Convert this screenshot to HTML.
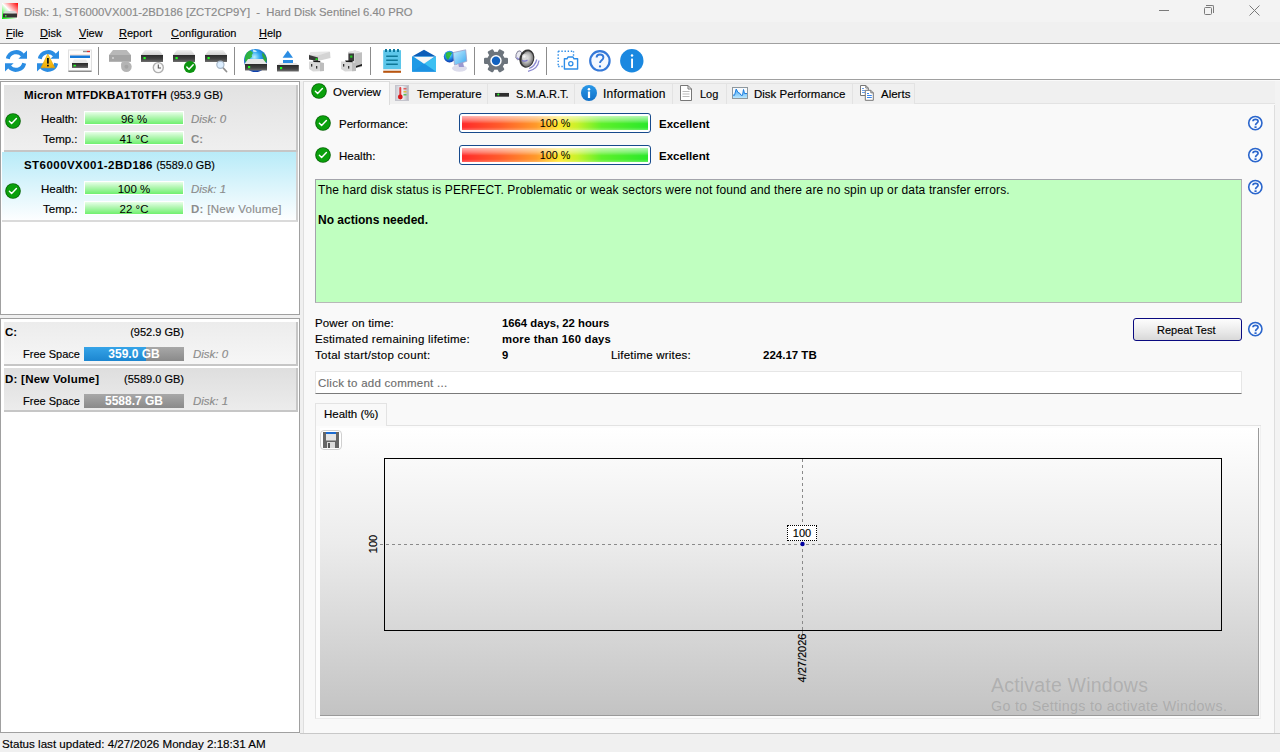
<!DOCTYPE html>
<html><head><meta charset="utf-8">
<style>
*{margin:0;padding:0;box-sizing:border-box}
html,body{width:1280px;height:752px;overflow:hidden;background:#f0f0f0;font-family:"Liberation Sans",sans-serif;font-size:11.5px;color:#000}
.a{position:absolute}
.t{position:absolute;white-space:nowrap;line-height:14px;-webkit-text-stroke:.15px currentColor}
.b,.t b,.ns{-webkit-text-stroke:0}
.b{font-weight:bold}
.u{text-decoration:underline;text-underline-offset:1px}
.sep{position:absolute;top:47px;width:1px;height:28px;background:#8c8c8c}
.ic{position:absolute}
.tab{position:absolute;top:83px;height:21px;background:#f0f0f0;border:1px solid #e3e3e3;border-bottom:none}
.hbar{position:absolute;height:14px;border:1px solid #fff;background:linear-gradient(#e8ffe8 0%,#b6f7b6 40%,#6ef06e 100%);text-align:center;line-height:13px;padding-top:1px;font-size:11.5px}
.pbar{position:absolute;left:459px;width:192px;height:20px;border:1px solid #174a8c;border-radius:3px;background:#fff;padding:2px}
.pfill{width:100%;height:100%;position:relative;background:linear-gradient(90deg,#ff2a2a 0%,#ff5a2a 20%,#ff9a2a 40%,#ffe62a 52%,#c8f22a 62%,#5ef02a 75%,#2ae82a 100%)}
.pfill:after{content:"";position:absolute;left:0;top:0;right:0;bottom:0;background:linear-gradient(rgba(255,255,255,.65) 0%,rgba(255,255,255,.35) 30%,rgba(255,255,255,0) 55%,rgba(255,255,255,0) 80%,rgba(255,255,255,.25) 100%)}
.pfill span{position:absolute;left:0;right:0;top:0px;text-align:center;line-height:14px;z-index:2;font-size:10.8px}
.help{position:absolute;width:16px;height:16px}
</style></head><body>

<!-- ================= TITLE BAR ================= -->
<div class="a" style="left:0;top:0;width:1280px;height:22px;background:#f3f3f3"></div>
<svg class="ic" style="left:2px;top:3px" width="16" height="16" viewBox="0 0 16 16">
 <defs>
  <linearGradient id="tg1" x1="1" y1="0" x2="0" y2="1"><stop offset="0" stop-color="#ff0000"/><stop offset=".5" stop-color="#ffffff"/><stop offset="1" stop-color="#00ee00"/></linearGradient>
 </defs>
 <rect x="0" y="0" width="16" height="16" fill="url(#tg1)"/>
 <path d="M3 8 L13 8 L15 10.5 L1 10.5 Z" fill="#d8d8d8"/>
 <rect x="1" y="10.5" width="14" height="4" fill="#333"/>
 <rect x="3" y="12" width="1.5" height="1.5" fill="#3f3"/>
</svg>
<div class="t" style="left:24px;top:5px;color:#8a8a8a;font-size:11.3px">Disk: 1, ST6000VX001-2BD186 [ZCT2CP9Y]&nbsp; - &nbsp;Hard Disk Sentinel 6.40 PRO</div>
<div class="a" style="left:1159px;top:10px;width:10px;height:1px;background:#7a7a7a"></div>
<div class="a" style="left:1204px;top:7px;width:8px;height:8px;border:1px solid #7a7a7a;border-radius:1.5px"></div>
<div class="a" style="left:1206px;top:5px;width:8px;height:8px;border-top:1px solid #7a7a7a;border-right:1px solid #7a7a7a;border-radius:0 2px 0 0"></div>
<svg class="ic" style="left:1249px;top:5px" width="11" height="11" viewBox="0 0 11 11"><path d="M0.5 0.5 L10.5 10.5 M10.5 0.5 L0.5 10.5" stroke="#7a7a7a" stroke-width="1"/></svg>

<!-- ================= MENU ================= -->
<div class="a" style="left:0;top:22px;width:1280px;height:21px;background:#f0f0f0"></div>
<div class="t" style="left:6px;top:26px;font-size:11px"><span class="u">F</span>ile</div>
<div class="t" style="left:40px;top:26px;font-size:11px"><span class="u">D</span>isk</div>
<div class="t" style="left:79px;top:26px;font-size:11px"><span class="u">V</span>iew</div>
<div class="t" style="left:119px;top:26px;font-size:11px"><span class="u">R</span>eport</div>
<div class="t" style="left:171px;top:26px;font-size:11px"><span class="u">C</span>onfiguration</div>
<div class="t" style="left:259px;top:26px;font-size:11px"><span class="u">H</span>elp</div>
<div class="a" style="left:0;top:43px;width:1280px;height:1px;background:#a0a0a0"></div>

<!-- ================= TOOLBAR ================= -->
<div class="a" style="left:0;top:44px;width:1280px;height:35px;background:#fff"></div>
<div class="a" style="left:0;top:79px;width:1280px;height:1px;background:#a0a0a0"></div>
<div class="a" style="left:0;top:80px;width:1280px;height:1px;background:#fafafa"></div>
<div class="sep" style="left:98px"></div>
<div class="sep" style="left:234px"></div>
<div class="sep" style="left:370px"></div>
<div class="sep" style="left:474px"></div>
<div class="sep" style="left:546px"></div>
<svg class="ic" style="left:0;top:44px" width="660" height="35" viewBox="0 44 660 35">
 <defs>
  <linearGradient id="dtop" x1="0" y1="0" x2="0" y2="1"><stop offset="0" stop-color="#f2f2f2"/><stop offset="1" stop-color="#cfcfcf"/></linearGradient>
  <linearGradient id="dbody" x1="0" y1="0" x2="0" y2="1"><stop offset="0" stop-color="#2a2a2a"/><stop offset=".6" stop-color="#444"/><stop offset="1" stop-color="#707070"/></linearGradient>
  <radialGradient id="globe" cx=".45" cy=".35" r=".7"><stop offset="0" stop-color="#b8f0ff"/><stop offset=".35" stop-color="#30a8f0"/><stop offset=".8" stop-color="#1050c0"/><stop offset="1" stop-color="#0830a0"/></radialGradient>
  <linearGradient id="scr" x1="0" y1="0" x2="1" y2="1"><stop offset="0" stop-color="#c8f0ff"/><stop offset="1" stop-color="#3aa8f0"/></linearGradient>
  <radialGradient id="spk" cx=".45" cy=".45" r=".6"><stop offset="0" stop-color="#e8e8e8"/><stop offset=".5" stop-color="#b8b8b8"/><stop offset=".85" stop-color="#7a7a7a"/><stop offset="1" stop-color="#505050"/></radialGradient>
  <linearGradient id="warn" x1="0" y1="0" x2="0" y2="1"><stop offset="0" stop-color="#ffe040"/><stop offset="1" stop-color="#f0a800"/></linearGradient>
  <g id="refresh">
   <path d="M2.8 8.8 A8.5 8.5 0 0 1 17.6 5.2" fill="none" stroke="#2b8de3" stroke-width="4"/>
   <path d="M22 0.5 L22 8.8 L13.4 8.8 Z" fill="#2b8de3"/>
   <path d="M19.2 13.2 A8.5 8.5 0 0 1 4.4 16.8" fill="none" stroke="#2b8de3" stroke-width="4"/>
   <path d="M0 21.5 L0 13.2 L8.6 13.2 Z" fill="#2b8de3"/>
  </g>
  <g id="disk">
   <path d="M4 0 L18 0 L22 5 L0 5 Z" fill="url(#dtop)"/>
   <rect x="0" y="5" width="22" height="7" fill="url(#dbody)"/>
   <rect x="2.5" y="7" width="2.2" height="2.2" fill="#22ff22"/>
  </g>
 </defs>
 <!-- 1 refresh -->
 <use href="#refresh" x="5" y="50"/>
 <!-- 2 refresh warn -->
 <use href="#refresh" x="37" y="50"/>
 <path d="M47.8 54 L54.8 67.8 L41 67.8 Z" fill="url(#warn)" stroke="#e8a000" stroke-width=".6" stroke-linejoin="round"/>
 <rect x="47" y="58" width="1.8" height="5.6" fill="#111"/>
 <rect x="47" y="64.8" width="1.8" height="1.6" fill="#111"/>
 <!-- 3 window disk -->
 <rect x="68.5" y="50" width="23" height="21.5" fill="#fcfcfc" stroke="#e0e0e0" stroke-width="1"/>
 <rect x="68.5" y="70.5" width="23" height="1.5" fill="#8c8c8c"/>
 <rect x="83" y="50.8" width="4" height="1.4" fill="#909090"/>
 <rect x="87" y="50.8" width="3" height="1.4" fill="#e03030"/>
 <rect x="70" y="54.5" width="20" height="1" fill="#f4d0c0"/>
 <rect x="70" y="55.5" width="20" height="2.5" fill="#1478d8"/>
 <path d="M74 59.5 L86 59.5 L88 63 L72 63 Z" fill="#e8e8e8"/>
 <rect x="72" y="63" width="16" height="5" fill="url(#dbody)"/>
 <rect x="73.5" y="64.8" width="2.4" height="1.6" fill="#22ff22"/>
 <!-- 4 gray disk + gear -->
 <path d="M113 50 L126.6 50 L131 55 L109 55 Z" fill="#b8b8b8"/>
 <rect x="109" y="55" width="22" height="6.8" fill="#a4a4a4"/>
 <rect x="112" y="57" width="2" height="2" fill="#c8c8c8"/>
 <circle cx="124" cy="64.5" r="3" fill="#b8b8b8"/>
 <circle cx="126.4" cy="66.8" r="5.3" fill="#b4b4b4"/>
 <circle cx="126.4" cy="66.8" r="2" fill="#a4a4a4"/>
 <!-- 5 disk + clock -->
 <use href="#disk" x="141" y="50"/>
 <circle cx="158.3" cy="67.6" r="5" fill="#f8f8f8" stroke="#b0b0b0" stroke-width="1.4"/>
 <path d="M158.3 64.5 L158.3 68 L161 68" fill="none" stroke="#555" stroke-width="1.1"/>
 <!-- 6 disk + check -->
 <use href="#disk" x="173" y="50"/>
 <circle cx="189.9" cy="66.9" r="6" fill="#0c9410"/>
 <path d="M186.8 67 L189 69.2 L193.2 64.8" fill="none" stroke="#fff" stroke-width="1.5" stroke-linecap="round" stroke-linejoin="round"/>
 <!-- 7 disk + magnifier -->
 <use href="#disk" x="205" y="50"/>
 <line x1="222.3" y1="67" x2="226.5" y2="71.5" stroke="#909090" stroke-width="1.8" stroke-linecap="round"/>
 <circle cx="220.4" cy="64.8" r="3.6" fill="#dceeff" stroke="#a8b8c8" stroke-width="1.2"/>
 <!-- 8 globe + disk -->
 <circle cx="255.5" cy="60.5" r="11.5" fill="url(#globe)"/>
 <path d="M245 57 Q246 52 250 50.5 Q252 51 253 53 Q251 55 252 57 Q249 58 249.5 62 L246 63 Q244.5 60 245 57 Z" fill="#2fb52f" opacity=".9"/>
 <path d="M262.5 52.5 Q266 55 266.8 60 L266 63 L263 62.5 Q262 60 263.5 58 Q261.5 56 262.5 52.5 Z" fill="#2fae2f" opacity=".9"/>
 <path d="M253 49.5 Q256 50 257 51.5 Q255 52.5 253 51.5 Z" fill="#e8f8ff" opacity=".8"/>
 <path d="M248 59 L263 59 L267 64 L244.5 64 Z" fill="#e6e6e6"/>
 <rect x="245" y="64" width="22" height="6.5" fill="url(#dbody)"/>
 <rect x="248" y="66" width="2.2" height="2.2" fill="#22ff22"/>
 <!-- 9 eject disk -->
 <path d="M287.8 50.5 L293 57.7 L282.6 57.7 Z" fill="#2b8de3"/>
 <rect x="283" y="60" width="10" height="3" fill="#2b8de3"/>
 <path d="M280 63 L296 63 L298.8 65 L277 65 Z" fill="#e4e4e4"/>
 <rect x="277" y="65" width="21.8" height="6.5" fill="url(#dbody)"/>
 <rect x="280" y="67" width="2.2" height="2.2" fill="#22ff22"/>
 <!-- 10 connector -->
 <path d="M311 52 L330 51.8 L330.5 58 L318 61 L309 59.5 L309 55 Z" fill="#d4d4d4"/>
 <path d="M311 52 L330 51.8 L318 55.5 L309 55 Z" fill="#e6e6e6"/>
 <path d="M309 55 L318 57.5 L318 61 L309 59.5 Z" fill="#3a3a3a"/>
 <rect x="315.5" y="58.3" width="2.2" height="1.8" fill="#22dd22"/>
 <path d="M309 61.5 L320 61.5 L324 63 L324 71 L313 71.5 L309 69 Z" fill="#d8d8d8"/>
 <path d="M320 63 L324 63 L324 71 L320 71.3 Z" fill="#bdbdbd"/>
 <path d="M313 60.5 L320 61 L320.5 62.3 L313.5 62 Z" fill="#1a1a1a"/>
 <rect x="311" y="64" width="1.3" height="2.6" fill="#333"/>
 <rect x="316" y="66" width="1.3" height="2.6" fill="#333"/>
 <!-- 11 connector 2 -->
 <path d="M348 52 L355 50.5 L362 52.5 L362 67 L355 67.5 L348 65 Z" fill="#d0d0d0"/>
 <path d="M355 52 L362 52.5 L362 67 L355 67.5 Z" fill="#c0c0c0"/>
 <path d="M348 52 L355 50.5 L362 52.5 L355 53.5 Z" fill="#e4e4e4"/>
 <rect x="348.5" y="53.5" width="5.5" height="7.5" fill="#3a3a3a"/>
 <rect x="350.2" y="55.5" width="2.2" height="2.2" fill="#22cc22"/>
 <path d="M341 61.5 L352 61.5 L356 63 L356 71 L345 71.5 L341 69 Z" fill="#d8d8d8"/>
 <path d="M352 63 L356 63 L356 71 L352 71.3 Z" fill="#bdbdbd"/>
 <path d="M345 60.5 L352 60.5 L353 62.3 L346 62 Z" fill="#1a1a1a"/>
 <rect x="343" y="64" width="1.3" height="2.6" fill="#333"/>
 <rect x="348" y="66" width="1.3" height="2.6" fill="#333"/>
 <path d="M356 66 L362 64 L362 65.8 L356 67.8 Z" fill="#1a1a1a"/>
 <!-- 12 notepad -->
 <rect x="383.2" y="50.2" width="17.8" height="19" fill="#5cc6ea"/>
 <rect x="385" y="49" width="2" height="3" fill="#0e7aa0"/>
 <rect x="389" y="49" width="2" height="3" fill="#0e7aa0"/>
 <rect x="393" y="49" width="2" height="3" fill="#0e7aa0"/>
 <rect x="397" y="49" width="2" height="3" fill="#0e7aa0"/>
 <rect x="386.2" y="55.5" width="11.6" height="1.5" fill="#0e7898"/>
 <rect x="386.2" y="59.5" width="11.6" height="1.5" fill="#0e7898"/>
 <rect x="386.2" y="63.5" width="11.6" height="1.5" fill="#0e7898"/>
 <rect x="383.2" y="69.2" width="17.8" height="1.6" fill="#e8e4e0"/>
 <rect x="383.2" y="70.8" width="17.8" height="2" fill="#b85510"/>
 <!-- 13 mail -->
 <path d="M412 56.5 L424 49.8 L436 56.5 Z" fill="#0b5cb8"/>
 <rect x="412" y="56.5" width="24" height="15.3" fill="#1e9ae6"/>
 <path d="M436 56.5 L436 71.8 L424 63.5 Z" fill="#3cc0f2"/>
 <path d="M424 63.5 L436 71.8 L412 71.8 Z" fill="#1a8ee0" opacity=".6"/>
 <path d="M414 57 L434 57 L424 63.8 Z" fill="#f6f6f6"/>
 <!-- 14 globe + monitor -->
 <circle cx="449.6" cy="56.6" r="5.8" fill="url(#globe)"/>
 <path d="M446 53 Q449 51 452 53 Q450 57 448 60 Q445 57 446 53 Z" fill="#2ab830" opacity=".9"/>
 <ellipse cx="459.5" cy="68.3" rx="7.5" ry="3.4" fill="#dcdcec"/>
 <path d="M458 63 L463 62 L464 67 L459 67 Z" fill="#9a98d0"/>
 <path d="M453.1 52.6 L465.7 49.8 L466.8 61.3 L454.5 65.1 Z" fill="url(#scr)" stroke="#a0a0c8" stroke-width=".8"/>
 <!-- 15 gear -->
 <g transform="translate(496 60.8)">
  <circle r="9" fill="#6c747c"/>
  <rect x="-3.1" y="-12" width="6.2" height="6" rx="1.2" transform="rotate(30)" fill="#6c747c"/><rect x="-3.1" y="-12" width="6.2" height="6" rx="1.2" transform="rotate(90)" fill="#6c747c"/><rect x="-3.1" y="-12" width="6.2" height="6" rx="1.2" transform="rotate(150)" fill="#6c747c"/><rect x="-3.1" y="-12" width="6.2" height="6" rx="1.2" transform="rotate(210)" fill="#6c747c"/><rect x="-3.1" y="-12" width="6.2" height="6" rx="1.2" transform="rotate(270)" fill="#6c747c"/><rect x="-3.1" y="-12" width="6.2" height="6" rx="1.2" transform="rotate(330)" fill="#6c747c"/>
  <circle r="5.7" fill="#fff"/>
  <circle r="4.2" fill="#1262c0"/>
 </g>
 <!-- 16 speaker -->
 <ellipse cx="518.8" cy="55.3" rx="2.8" ry="4.6" fill="#e8e8f0" stroke="#707088" stroke-width=".8" transform="rotate(15 518.8 55.3)"/>
 <path d="M516.8 57.5 Q518 59.8 520.5 59" fill="none" stroke="#8a86d8" stroke-width="1.2"/>
 <ellipse cx="526.8" cy="58.6" rx="7.4" ry="9.3" fill="#363636" transform="rotate(15 526.8 58.6)"/>
 <ellipse cx="527.3" cy="59" rx="5.8" ry="7.8" fill="url(#spk)" transform="rotate(15 527.3 59)"/>
 <ellipse cx="524.8" cy="57.3" rx="2.8" ry="3.2" fill="#d8d8d8"/>
 <circle cx="524.3" cy="56.5" r="1.3" fill="#f4f4f4"/>
 <path d="M522 60.5 Q525 62 527.5 60" fill="none" stroke="#7a76d0" stroke-width="1.1"/>
 <path d="M529 68.5 Q535 66.5 536.8 59.5" fill="none" stroke="#8c8ad0" stroke-width="1.3"/>
 <path d="M528 71.3 Q537.8 69.5 539 60.5" fill="none" stroke="#8c8ad0" stroke-width="1.3"/>
 <!-- 17 screenshot -->
 <path d="M558.2 51.2 H574 M573.5 51.2 V56 M558.2 51.2 V66.6 M558.2 66.5 H563" fill="none" stroke="#2d8de8" stroke-width="1.4" stroke-dasharray="1.4 1.75"/>
 <path d="M564.4 58.8 H567 L568 57 H573 L574 58.8 H577.6 V69 H564.4 Z" fill="none" stroke="#2d8de8" stroke-width="1.4" stroke-linejoin="round"/>
 <circle cx="570.8" cy="63.8" r="2.1" fill="none" stroke="#2d8de8" stroke-width="1.3"/>
 <!-- 18 help -->
 <circle cx="599.9" cy="60.8" r="9.7" fill="#f4f8ff" stroke="#3478d8" stroke-width="2.2"/>
 <path d="M596.6 57.6 C596.6 53.4 603.4 53.4 603.4 57.6 C603.4 60.2 600 60.4 600 63" fill="none" stroke="#3478d8" stroke-width="1.9"/>
 <circle cx="600" cy="66.4" r="1.15" fill="#3478d8"/>
 <!-- 19 info -->
 <circle cx="631.8" cy="60.8" r="11.7" fill="#1a88e0"/>
 <circle cx="632" cy="55.6" r="1.25" fill="#fff"/>
 <rect x="631.1" y="58.6" width="1.9" height="9.4" fill="#fff"/>
</svg>


<!-- ================= LEFT PANEL ================= -->
<div class="a" style="left:0;top:81px;width:300px;height:234px;background:#fff;border:1px solid #a0a0a0"></div>
<div class="a" style="left:0;top:318px;width:300px;height:415px;background:#fff;border:1px solid #a0a0a0"></div>
<svg width="0" height="0" style="position:absolute">
 <defs>
  <symbol id="chk" viewBox="0 0 16 16">
   <circle cx="8" cy="8" r="7.8" fill="#076807"/>
   <circle cx="8" cy="8" r="6.9" fill="#0aa00c"/>
   <path d="M4.4 8.3 L6.6 10.4 L11.4 5.4" fill="none" stroke="#fff" stroke-width="1.45" stroke-linecap="round" stroke-linejoin="round"/>
  </symbol>
  <symbol id="qst" viewBox="0 0 15 15">
   <circle cx="7.8" cy="7.6" r="6.2" fill="#fafcff" stroke="#2b66cc" stroke-width="1.5"/>
   <path d="M5.6 5.9 C5.6 3.4 10.4 3.4 10.4 5.9 C10.4 7.6 8 7.8 8 9.6" fill="none" stroke="#2b66cc" stroke-width="1.6"/>
   <rect x="7" y="10.6" width="2" height="1.6" fill="#2b66cc"/>
  </symbol>
 </defs>
</svg>
<!-- disk item 1 -->
<div class="a" style="left:4px;top:85px;width:294px;height:67px;background:linear-gradient(#e2e2e2,#efefef);border-right:2px solid #c6c6c6;border-bottom:2px solid #c6c6c6"></div>
<div class="t b" style="left:24px;top:88px"><span style="letter-spacing:.15px">Micron MTFDKBA1T0TFH</span> <span style="font-weight:normal;font-size:10.8px;-webkit-text-stroke:.15px currentColor">(953.9 GB)</span></div>
<svg class="ic" style="left:5px;top:113px" width="16" height="16"><use href="#chk"/></svg>
<div class="t" style="left:41px;top:112px">Health:</div>
<div class="t" style="left:43px;top:132px">Temp.:</div>
<div class="hbar" style="left:84px;top:111px;width:100px">96 %</div>
<div class="hbar" style="left:84px;top:131px;width:100px">41 °C</div>
<div class="t" style="left:191px;top:112px;color:#8c8c8c;font-style:italic">Disk: 0</div>
<div class="t b" style="left:191px;top:132px;color:#8c8c8c">C:</div>
<!-- disk item 2 -->
<div class="a" style="left:2px;top:152px;width:296px;height:70px;background:linear-gradient(#b8ebf8,#fdfeff);border-right:2px solid #d0d0d0;border-bottom:2px solid #dadada"></div>
<div class="t b" style="left:24px;top:158px"><span style="letter-spacing:.45px">ST6000VX001-2BD186</span> <span style="font-weight:normal;font-size:10.8px;-webkit-text-stroke:.15px currentColor">(5589.0 GB)</span></div>
<svg class="ic" style="left:5px;top:183px" width="16" height="16"><use href="#chk"/></svg>
<div class="t" style="left:41px;top:182px">Health:</div>
<div class="t" style="left:43px;top:202px">Temp.:</div>
<div class="hbar" style="left:84px;top:181px;width:100px">100 %</div>
<div class="hbar" style="left:84px;top:201px;width:100px">22 °C</div>
<div class="t" style="left:191px;top:182px;color:#8c8c8c;font-style:italic">Disk: 1</div>
<div class="t" style="left:191px;top:202px;color:#8c8c8c;letter-spacing:.3px"><b>D:</b> [New Volume]</div>

<!-- volume C -->
<div class="a" style="left:4px;top:322px;width:294px;height:44px;background:linear-gradient(#ececec,#f6f6f6);border-right:2px solid #c6c6c6;border-bottom:2px solid #c6c6c6"></div>
<div class="t b" style="left:5px;top:325px">C:</div>
<div class="t" style="left:84px;top:325px;width:100px;text-align:right;font-size:11px">(952.9 GB)</div>
<div class="t" style="left:23px;top:347px;font-size:11px">Free Space</div>
<div class="a" style="left:84px;top:347px;width:100px;height:14px;background:linear-gradient(#a8a8a8,#8a8a8a)"></div>
<div class="a" style="left:84px;top:347px;width:62px;height:14px;background:linear-gradient(#36a4e8,#1c86d0)"></div>
<div class="t b" style="left:84px;top:347px;width:100px;text-align:center;color:#fff;font-size:12px">359.0 GB</div>
<div class="t" style="left:193px;top:347px;color:#8c8c8c;font-style:italic">Disk: 0</div>
<!-- volume D -->
<div class="a" style="left:4px;top:368px;width:294px;height:44px;background:linear-gradient(#dedede,#ececec);border-right:2px solid #c6c6c6;border-bottom:2px solid #c6c6c6"></div>
<div class="t b" style="left:5px;top:372px;letter-spacing:.25px">D: [New Volume]</div>
<div class="t" style="left:84px;top:372px;width:100px;text-align:right;font-size:11px">(5589.0 GB)</div>
<div class="t" style="left:23px;top:394px;font-size:11px">Free Space</div>
<div class="a" style="left:84px;top:394px;width:100px;height:14px;background:linear-gradient(#a8a8a8,#8a8a8a)"></div>
<div class="t b" style="left:84px;top:394px;width:100px;text-align:center;color:#fff;font-size:12px">5588.7 GB</div>
<div class="t" style="left:193px;top:394px;color:#8c8c8c;font-style:italic">Disk: 1</div>

<!-- ================= MAIN ================= -->
<div class="a" style="left:303px;top:103px;width:972px;height:631px;background:#f9f9f9;border:1px solid #dedede;border-bottom:none"></div>
<div class="a" style="left:300px;top:733px;width:980px;height:1px;background:#c8c8c8"></div>
<div class="a" style="left:1275px;top:81px;width:5px;height:652px;background:#f3f3f3"></div>
<div class="a" style="left:303px;top:103px;width:972px;height:1px;background:#e3e3e3"></div>
<div class="a" style="left:303px;top:104px;width:972px;height:1px;background:#f9f9f9"></div>
<div class="tab" style="left:389px;width:99px"></div>
<div class="tab" style="left:487px;width:88px"></div>
<div class="tab" style="left:574px;width:99px"></div>
<div class="tab" style="left:672px;width:55px"></div>
<div class="tab" style="left:726px;width:127px"></div>
<div class="tab" style="left:852px;width:63px"></div>
<div class="a" style="left:303px;top:81px;width:87px;height:24px;background:#f9f9f9;border:1px solid #dcdcdc;border-bottom:none"></div>
<svg class="ic" style="left:311px;top:83px" width="16" height="16"><use href="#chk"/></svg>
<div class="t" style="left:333px;top:85px">Overview</div>
<!-- thermometer -->
<svg class="ic" style="left:395px;top:85px" width="14" height="16" viewBox="0 0 14 16">
 <defs><linearGradient id="thg" x1="0" y1="0" x2="1" y2="0"><stop offset="0" stop-color="#c8c8d0"/><stop offset=".5" stop-color="#f4f4f8"/><stop offset="1" stop-color="#b0b0b8"/></linearGradient></defs>
 <rect x="0.5" y="0.5" width="13" height="15" fill="url(#thg)" stroke="#c4c4cc"/>
 <rect x="4.3" y="2" width="2" height="9" rx="1" fill="#e04040"/>
 <circle cx="5.3" cy="12" r="2.4" fill="#d81818"/>
 <rect x="8.5" y="3" width="3" height="1.5" fill="#e06060"/>
 <rect x="8.5" y="6" width="3" height="1.5" fill="#e0c040"/>
 <rect x="8.5" y="9" width="3" height="1.5" fill="#60c060"/>
</svg>
<div class="t" style="left:417px;top:87px">Temperature</div>
<!-- smart disk -->
<svg class="ic" style="left:494px;top:91px" width="16" height="7" viewBox="0 0 16 7">
 <path d="M2.5 0.5 L13.5 0.5 L15 2 L1 2 Z" fill="#e4e4e4"/>
 <rect x="1" y="2" width="14" height="3.7" fill="#2e2e2e"/>
 <circle cx="4.3" cy="3.6" r="1" fill="#2cff2c"/>
</svg>
<div class="t" style="left:516px;top:87px;font-size:11px">S.M.A.R.T.</div>
<!-- info -->
<svg class="ic" style="left:581px;top:85px" width="16" height="16" viewBox="0 0 16 16">
 <defs><linearGradient id="ig" x1="0" y1="0" x2="0" y2="1"><stop offset="0" stop-color="#2a98e8"/><stop offset="1" stop-color="#1070c8"/></linearGradient></defs>
 <circle cx="8" cy="8" r="8" fill="url(#ig)"/>
 <rect x="6.9" y="6.5" width="2.2" height="6.5" fill="#fff"/>
 <circle cx="8" cy="4.3" r="1.3" fill="#fff"/>
</svg>
<div class="t" style="left:603px;top:87px;font-size:12px;letter-spacing:.25px">Information</div>
<!-- log doc -->
<svg class="ic" style="left:680px;top:85px" width="12" height="16" viewBox="0 0 12 16">
 <path d="M0.5 0.5 L8 0.5 L11.5 4 L11.5 15.5 L0.5 15.5 Z" fill="#fff" stroke="#777"/>
 <path d="M8 0.5 L8 4 L11.5 4" fill="none" stroke="#777"/>
 <path d="M2.5 6.5 H9.5 M2.5 9 H9.5 M2.5 11.5 H9.5" stroke="#bbb"/>
</svg>
<div class="t" style="left:700px;top:87px;font-size:11px">Log</div>
<!-- disk perf -->
<svg class="ic" style="left:732px;top:87px" width="16" height="12" viewBox="0 0 16 12">
 <defs><linearGradient id="dpg" x1="0" y1="0" x2="0" y2="1"><stop offset="0" stop-color="#4aa8f0"/><stop offset="1" stop-color="#b8e6ff"/></linearGradient></defs>
 <rect x="0.5" y="0.5" width="15" height="11" fill="#f6f9fc" stroke="#8e989e"/>
 <path d="M1 11 L1 8 L2.5 8.3 L4.2 2 L6 5.5 L7.5 6 L9 8.3 L10.5 8.3 L11.5 2.5 L12.5 6.5 L15 6.5 L15 11 Z" fill="url(#dpg)"/>
 <path d="M1 8 L2.5 8.3 L4.2 2 L6 5.5 L7.5 6 L9 8.3 L10.5 8.3 L11.5 2.5 L12.5 6.5 L15 6.5" fill="none" stroke="#1c7ee0" stroke-width="1"/>
</svg>
<div class="t" style="left:754px;top:87px">Disk Performance</div>
<!-- alerts -->
<svg class="ic" style="left:860px;top:85px" width="14" height="16" viewBox="0 0 14 16">
 <path d="M0.5 0.5 L5.8 0.5 L8.3 3 L8.3 10.5 L0.5 10.5 Z" fill="#fff" stroke="#767676"/>
 <path d="M5.8 0.5 L5.8 3 L8.3 3" fill="none" stroke="#767676"/>
 <path d="M2 3.5 H4 M2 5.5 H5.5 M2 7.5 H5" stroke="#6a9ee8" stroke-width="1"/>
 <path d="M5.3 5.3 L10.8 5.3 L13.3 7.8 L13.3 15.3 L5.3 15.3 Z" fill="#fff" stroke="#767676"/>
 <path d="M10.8 5.3 L10.8 7.8 L13.3 7.8" fill="none" stroke="#767676"/>
 <path d="M7 8.5 H9 M7 10.5 H11.8 M7 12.5 H11.8" stroke="#3a86ec" stroke-width="1.1"/>
</svg>
<div class="t" style="left:881px;top:87px">Alerts</div>
<svg class="ic" style="left:315px;top:115px" width="16" height="16"><use href="#chk"/></svg>
<div class="t" style="left:339px;top:117px">Performance:</div>
<div class="pbar" style="top:113px"><div class="pfill"><span>100 %</span></div></div>
<div class="t b" style="left:659px;top:117px">Excellent</div>
<svg class="help" style="left:1247px;top:115px"><use href="#qst"/></svg>

<svg class="ic" style="left:315px;top:147px" width="16" height="16"><use href="#chk"/></svg>
<div class="t" style="left:339px;top:149px">Health:</div>
<div class="pbar" style="top:145px"><div class="pfill"><span>100 %</span></div></div>
<div class="t b" style="left:659px;top:149px">Excellent</div>
<svg class="help" style="left:1247px;top:147px"><use href="#qst"/></svg>

<div class="a" style="left:315px;top:179px;width:927px;height:124px;background:#c0ffc0;border:1px solid #a4a4ac;border-right-color:#b0b0b0;border-bottom-color:#b8b8b8"></div>
<div class="t ns" style="left:318px;top:183px;font-size:12px;letter-spacing:.14px">The hard disk status is PERFECT. Problematic or weak sectors were not found and there are no spin up or data transfer errors.</div>
<div class="t b" style="left:318px;top:213px;font-size:12px">No actions needed.</div>
<svg class="help" style="left:1247px;top:179px"><use href="#qst"/></svg>

<div class="t" style="left:315px;top:316px;letter-spacing:.15px">Power on time:</div>
<div class="t" style="left:315px;top:332px;letter-spacing:.25px">Estimated remaining lifetime:</div>
<div class="t" style="left:315px;top:348px;letter-spacing:.27px">Total start/stop count:</div>
<div class="t b" style="left:502px;top:316px;font-size:11.3px">1664 days, 22 hours</div>
<div class="t b" style="left:502px;top:332px;font-size:11.3px;letter-spacing:.2px">more than 160 days</div>
<div class="t b" style="left:502px;top:348px;font-size:11.3px">9</div>
<div class="t" style="left:611px;top:348px;letter-spacing:.2px">Lifetime writes:</div>
<div class="t b" style="left:763px;top:348px">224.17 TB</div>

<div class="a" style="left:1133px;top:318px;width:109px;height:23px;border:1px solid #0a0a80;border-radius:3px;background:linear-gradient(#fdfdfd,#e9e9e9 60%,#d8d8d8)"></div>
<div class="t" style="left:1157px;top:323px;font-size:11px">Repeat Test</div>
<svg class="help" style="left:1247px;top:321px"><use href="#qst"/></svg>

<div class="a" style="left:315px;top:371px;width:927px;height:23px;background:#fff;border:1px solid #e6e6e6;border-bottom:1px solid #7a7a7a"></div>
<div class="t" style="left:318px;top:376px;color:#6d6d6d;letter-spacing:.25px">Click to add comment ...</div>
<div class="a" style="left:386px;top:425px;width:875px;height:1px;background:#e3e3e3"></div>
<div class="a" style="left:315px;top:403px;width:72px;height:24px;background:#f9f9f9;border:1px solid #e3e3e3;border-bottom:none"></div>
<div class="t" style="left:324px;top:407px">Health (%)</div>
<div class="a" style="left:315px;top:426px;width:946px;height:293px;background:#fcfcfc;border-left:1px solid #e3e3e3;border-right:1px solid #f0f0f0;border-bottom:1px solid #ececec"></div>
<div class="a" style="left:320px;top:428px;width:939px;height:288px;background:linear-gradient(#ffffff 0%,#ececec 40%,#c3c3c3 100%);border-right:1px solid #9a9a9a;border-bottom:1px solid #9a9a9a"></div>
<!-- save button -->
<div class="a" style="left:320px;top:430px;width:22px;height:20px;background:#fff;border:1px solid #d0d0d0;border-radius:4px"></div>
<svg class="ic" style="left:323px;top:432px" width="16" height="16" viewBox="0 0 16 16">
 <rect x="0" y="0" width="16" height="16" fill="#666"/>
 <rect x="3" y="0" width="10" height="2" fill="#1a6ad0"/>
 <rect x="3" y="2" width="10" height="6.5" fill="#e4e4e4"/>
 <rect x="4" y="10" width="8" height="6" fill="#dcdcdc"/>
 <rect x="5" y="11" width="2" height="5" fill="#555"/>
</svg>
<!-- plot rect -->
<div class="a" style="left:384px;top:458px;width:838px;height:173px;border:1.5px solid #000"></div>
<svg class="ic" style="left:376px;top:455px" width="860" height="190" viewBox="376 455 860 190">
 <line x1="380" y1="544.5" x2="1221" y2="544.5" stroke="#8a8a8a" stroke-width="1" stroke-dasharray="3 3"/>
 <line x1="802.5" y1="459" x2="802.5" y2="631" stroke="#8a8a8a" stroke-width="1" stroke-dasharray="3 3"/>
 <line x1="802.5" y1="631" x2="802.5" y2="635" stroke="#8a8a8a" stroke-width="1"/>
 <circle cx="802.5" cy="544" r="2.2" fill="#0000a0"/>
</svg>
<div class="a" style="left:787px;top:525px;width:30px;height:16px;background:#fff;border:1px dotted #000"></div>
<div class="t" style="left:787px;top:526px;width:30px;text-align:center;font-size:11px;line-height:14px">100</div>
<div class="t" style="left:358px;top:537px;width:30px;text-align:center;font-size:11px;transform:rotate(-90deg)">100</div>
<div class="t" style="left:777px;top:651px;width:50px;text-align:center;font-size:11px;transform:rotate(-90deg)">4/27/2026</div>
<div class="t ns" style="left:991px;top:674px;font-size:19.5px;line-height:22px;letter-spacing:.2px;color:rgba(120,120,120,.32)">Activate Windows</div>
<div class="t ns" style="left:991px;top:698px;font-size:14.3px;line-height:17px;letter-spacing:.3px;color:rgba(120,120,120,.32)">Go to Settings to activate Windows.</div>

<!-- ================= STATUS ================= -->
<div class="t" style="left:2px;top:737px;font-size:11.6px">Status last updated: 4/27/2026 Monday 2:18:31 AM</div>
</body></html>
